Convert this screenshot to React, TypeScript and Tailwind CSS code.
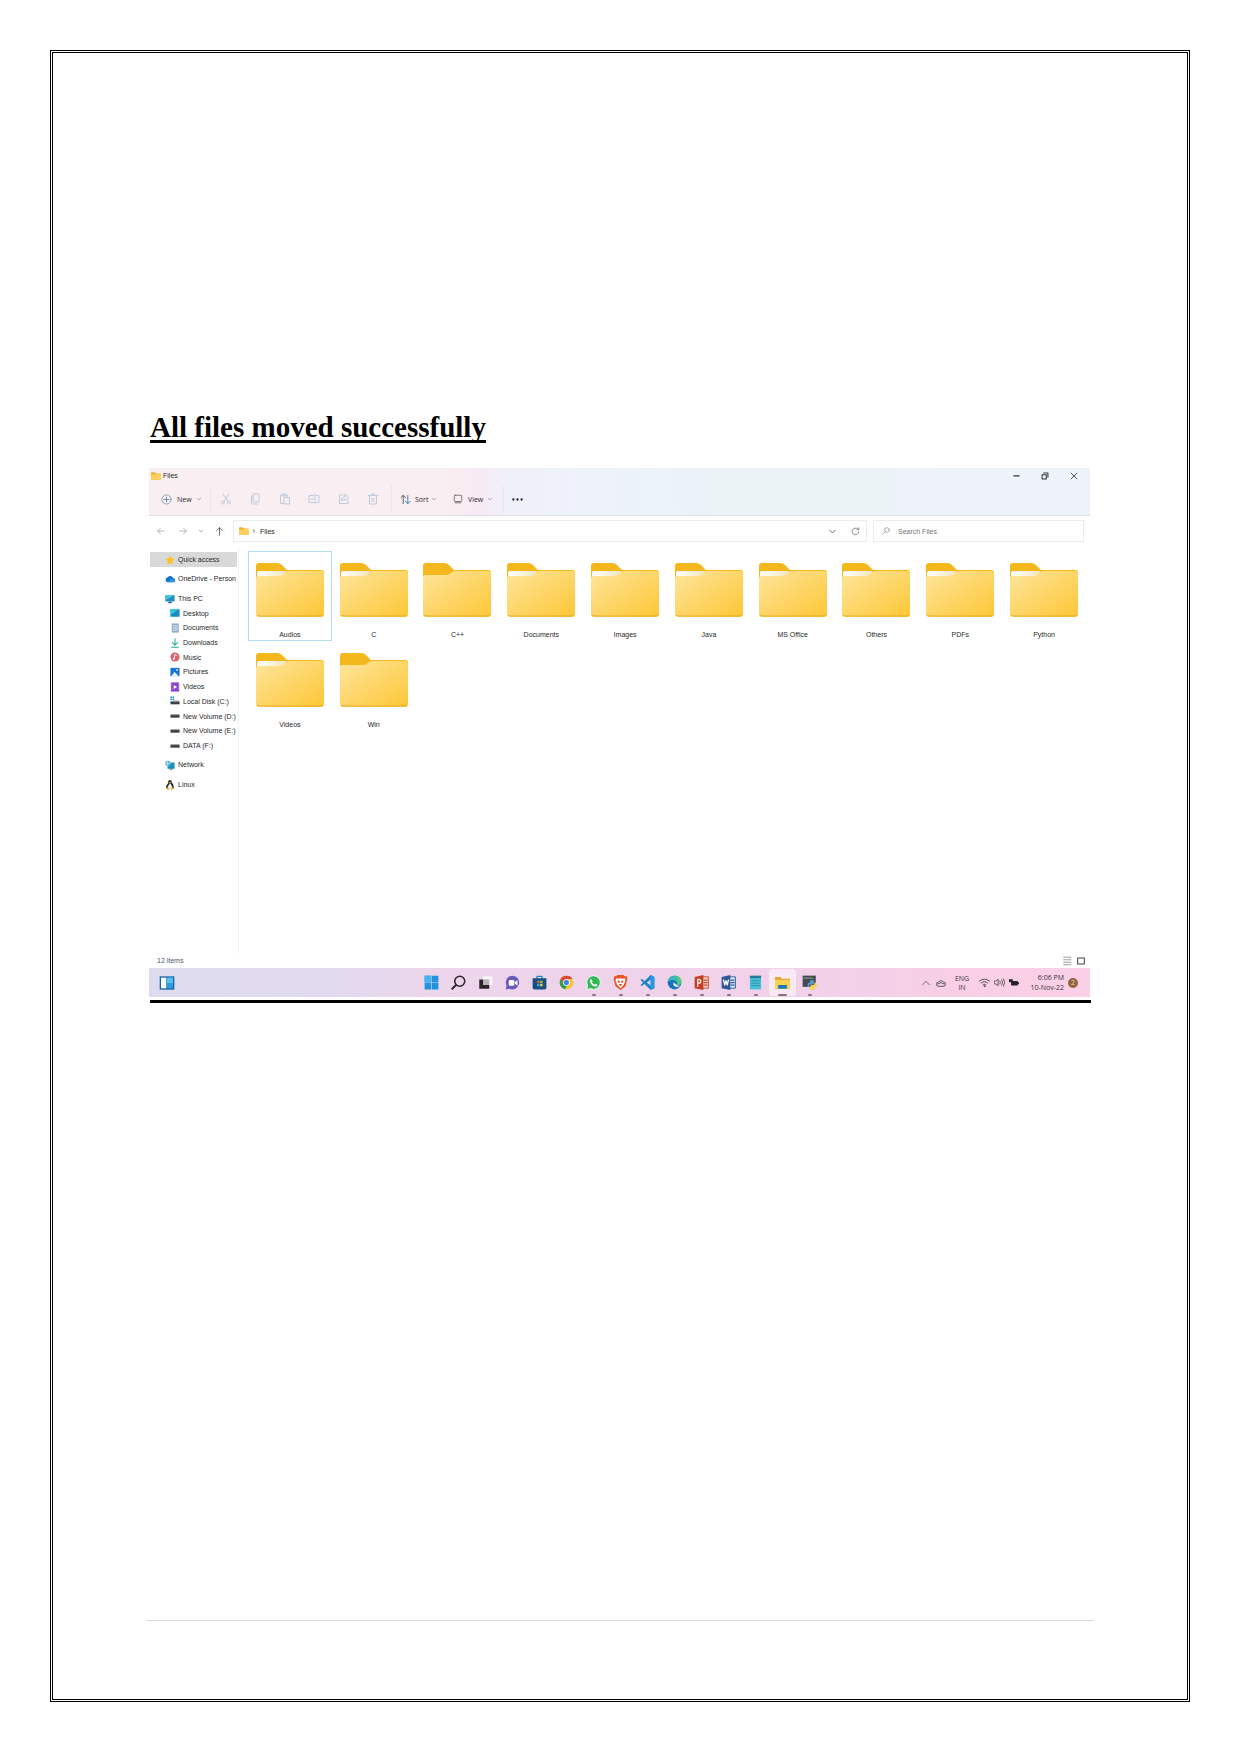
import React from "react";

type Kids = { children: React.ReactNode };

function Ico({ s = 12, children, stroke = "none" }: Kids & { s?: number; stroke?: string }) {
  return (
    <svg width={s} height={s} viewBox="0 0 24 24" fill="none" stroke={stroke} strokeWidth="2" strokeLinecap="round" strokeLinejoin="round" className="shrink-0" aria-hidden="true">
      {children}
    </svg>
  );
}

const MiniFolder = () => (
  <Ico s={10}>
    <path d="M0 5q0-2 2-2h7l3 3h10q2 0 2 2v11q0 2-2 2H2q-2 0-2-2z" fill="#efb52b" />
    <path d="M0 9h9l3-2h12v12q0 2-2 2H2q-2 0-2-2z" fill="#fbd05c" />
  </Ico>
);

const Caret = ({ s = 4 }: { s?: number }) => (
  <Ico s={s} stroke="#8a8a8a"><path d="M2 8l10 9 10-9" strokeWidth="4" /></Ico>
);

function BigFolder({ full }: { full: boolean }) {
  return (
    <svg viewBox="0 0 68 54" className="block h-[54px] w-[68px]" aria-hidden="true">
      <defs>
        <linearGradient id="folderFront" x1="0" y1="0" x2="1" y2="1">
          <stop offset="0" stopColor="#fee69c" />
          <stop offset="1" stopColor="#fdc636" />
        </linearGradient>
        <linearGradient id="folderPaper" x1="0" y1="0" x2="1" y2="0">
          <stop offset="0" stopColor="#ffffff" />
          <stop offset="1" stopColor="#f3e6bd" />
        </linearGradient>
      </defs>
      <path d="M0 3q0-3 3-3h18q3 0 5 2l5 5h34q3 0 3 3v20H0z" fill="#f5b81c" />
      {full ? (
        <path d="M0 14q0-2 2-2h21q3 0 5-2l1-1q2-1 4-1h32q3 0 3 3v40q0 3-3 3H3q-3 0-3-3z" fill="url(#folderFront)" />
      ) : (
        <>
          <path d="M1 10q0-2 2-2h27v6H1z" fill="url(#folderPaper)" />
          <path d="M0 15q0-2 2-2h21q3 0 5-2l2-2q1-1 4-1h31q3 0 3 3v40q0 3-3 3H3q-3 0-3-3z" fill="url(#folderFront)" />
        </>
      )}
      <path d="M1 52q1 1 3 1h60q2 0 3-1" stroke="#e9ad25" fill="none" />
    </svg>
  );
}

const Drive = () => (
  <Ico s={10}><path d="M1 9h22v7H1z" fill="#3c3f43" /><path d="M2 8h20v2H2z" fill="#8f9397" /></Ico>
);

const side: Record<string, React.ReactNode> = {
  star: <Ico s={10}><path d="M12 1l3.3 7.3 8 .8-6 5.4 1.8 8L12 18.300l-7.100 4.200 1.800-8-6-5.400 8-.8z" fill="#fcc419" /></Ico>,
  cloud: <Ico s={10}><path d="M6 20a6 6 0 01-.5-11.500A8 8 0 0120 10a5 5 0 01-1 10z" fill="#1473c8" /><path d="M6 20l12-9a5 5 0 011 9z" fill="#2a9be8" /></Ico>,
  pc: <Ico s={10}><path d="M1 3h22v15H1z" fill="#1e8fbd" /><path d="M1 3h22L1 15z" fill="#45c3df" /><path d="M9 18h6v2h2v2H7v-2h2z" fill="#2c6f92" /></Ico>,
  desktop: <Ico s={10}><path d="M1 3h22v18H1z" fill="#1590c0" /><path d="M1 3h20L1 17z" fill="#36c6e0" /></Ico>,
  doc: <Ico s={10}><path d="M4 1h17v22H4z" fill="#92acc6" /><path d="M7 7h11M7 12h11M7 17h11" stroke="#eef5fb" /></Ico>,
  down: <Ico s={10} stroke="#27ad91"><path d="M12 2v14M6 11l6 6 6-6M4 22h16" strokeWidth="2.500" /></Ico>,
  music: <Ico s={10}><circle cx="12" cy="12" r="11" fill="#dc6365" /><path d="M11 16V6l5 2" stroke="#fff" /><circle cx="9" cy="16" r="2.500" fill="#fff" /></Ico>,
  pic: <Ico s={10}><path d="M1 2h22v20H1z" fill="#1976d2" /><path d="M3 22l8-10 10 10z" fill="#e9f6ff" /><circle cx="17" cy="7" r="2" fill="#fff" /></Ico>,
  video: <Ico s={10}><path d="M2 1h20v22H2z" fill="#8646c8" /><path d="M9 7l8 5-8 5z" fill="#fff" /><path d="M4 4v17M20 4v17" stroke="#b98ae6" strokeDasharray="2 4" /></Ico>,
  disk: <Ico s={10}><path d="M1 1h4v4H1zM6 1h4v4H6zM1 6h4v4H1zM6 6h4v4H6z" fill="#2b93cf" /><path d="M1 13h22v7H1z" fill="#3c3f43" /><path d="M7 11h15v2H7z" fill="#8f9397" /></Ico>,
  drive: <Drive />,
  net: <Ico s={10}><path d="M6 6h17v15H6z" fill="#1d8fc0" /><circle cx="7" cy="8" r="6.500" fill="#4baecb" /><path d="M1 8h12M7 2q-4 6 0 12" stroke="#c5eaf3" /><path d="M10 21h9v2h-9z" fill="#2c6f92" /></Ico>,
  linux: <Ico s={10}><path d="M12 0q5 0 4.500 6 6 7 5 14H2.500Q2 13 7.500 7 7 0 12 0z" fill="#2a2826" /><path d="M12 8q5 5 4.500 12h-9Q7 13 12 8z" fill="#fff" /><path d="M1 20l5-3 4 5-2 2zM23 20l-5-3-4 5 2 2zM9 5h6l-3 4z" fill="#e9a62b" /></Ico>,
};

const pcItems: [string, string][] = [
  ["desktop", "Desktop"], ["doc", "Documents"], ["down", "Downloads"], ["music", "Music"], ["pic", "Pictures"],
  ["video", "Videos"], ["disk", "Local Disk (C:)"], ["drive", "New Volume (D:)"], ["drive", "New Volume (E:)"], ["drive", "DATA (F:)"],
];

function SideItem({ icon, label, sub, active }: { icon: string; label: string; sub?: boolean; active?: boolean }) {
  return (
    <a href="#" className={`flex items-center gap-[3px] whitespace-nowrap ${sub ? "pl-5" : "h-[15px] pl-[15px]"} ${active ? "bg-[#d9d9d9]" : ""}`}>
      {side[icon]}
      <span>{label}</span>
    </a>
  );
}

const tools: [string, React.ReactNode][] = [
  ["Cut", <><path d="M6 2l10 15M18 2L8 17" /><circle cx="6" cy="19" r="3" /><circle cx="18" cy="19" r="3" /></>],
  ["Copy", <><rect x="8" y="2" width="12" height="16" rx="2" /><path d="M8 5q-3 0-3 3v11q0 3 3 3h9" /></>],
  ["Paste", <><path d="M9 21H3V4h14v4M7 2h6v4H7zM11 9h10v13H11z" /></>],
  ["Rename", <><path d="M12 5H2v14h10M17 5h5v14h-5M14 2v20M6 12h6" /></>],
  ["Share", <><path d="M10 4H3v17h17v-6M14 3l8 6-8 6v-3q-5 0-7 4 0-9 7-9z" /></>],
  ["Delete", <><path d="M2 5h20M5 5v17h14V5M9 5V2h6v3M9 10l6 7M15 10l-6 7" /></>],
];

const Sep = () => <span className="h-[26px] w-px bg-[#e9e4ea]" />;

const folders: [string, boolean][] = [
  ["Audios", false], ["C", false], ["C++", true], ["Documents", false], ["Images", false], ["Java", false],
  ["MS Office", false], ["Others", false], ["PDFs", false], ["Python", false], ["Videos", false], ["Win", true],
];

const apps: [string, number, React.ReactNode][] = [
  ["Start", 0, <><path d="M1 1h10.500v10.500H1zM12.500 1H23v10.500H12.500zM1 12.500h10.500V23H1zM12.500 12.500H23V23H12.500z" fill="#2292df" /><path d="M1 1h10.500v10.500H1z" fill="#42b4ec" /></>],
  ["Search", 0, <><circle cx="14" cy="10" r="8" stroke="#2e2730" strokeWidth="2.500" /><path d="M8 16l-6 6" stroke="#2e2730" strokeWidth="3" /></>],
  ["Task view", 0, <><path d="M8 2h15v14H8z" fill="#f8f4f7" /><path d="M2 7h6v9h10v6H2z" fill="#2b2729" /><path d="M8 7h10v9H8z" fill="#b9b3b7" /></>],
  ["Chat", 0, <><path d="M12 1a11 11 0 11-5 21l-6 1 1.500-6A11 11 0 0112 1z" fill="#6759bd" /><rect x="6" y="8" width="9" height="9" rx="2" fill="#fff" /><path d="M16 11l4-3v9l-4-3z" fill="#fff" /></>],
  ["Store", 0, <><path d="M8 6V2h8v4" stroke="#2386bd" /><path d="M1 5h22v15q0 3-3 3H4q-3 0-3-3z" fill="#164f82" /><path d="M8 9h4v4H8z" fill="#f05a3c" /><path d="M13 9h4v4h-4z" fill="#86c440" /><path d="M8 14h4v4H8z" fill="#35a9e0" /><path d="M13 14h4v4h-4z" fill="#fcc736" /></>],
  ["Chrome", 0, <><circle cx="12" cy="12" r="11" fill="#fac62e" /><path d="M2.500 6.500A11 11 0 0121.500 6.500H12L7 14z" fill="#df4435" /><path d="M2.500 6.500L8 15l5 1-3 6.800A11 11 0 012.500 6.500z" fill="#2c9e50" /><circle cx="12" cy="12" r="5" fill="#3c7fe3" stroke="#fff" strokeWidth="1.500" /></>],
  ["WhatsApp", 1, <><path d="M12 1a11 11 0 11-5 20.800L1 23l1.500-6A11 11 0 0112 1z" fill="#32b855" stroke="#f4fbf5" strokeWidth="1.500" /><path d="M8 6l2.500 4-1 1.500q1.500 3 4 4l1.500-1.500 3.500 2q-1 3-4 2.500Q8 17 6.500 10 6 7 8 6z" fill="#fff" /></>],
  ["Brave", 1, <><path d="M7 0h10l2 2h3l1 5-3 11-8 6-8-6L1 7l1-5h3z" fill="#ec5327" /><path d="M5 5l4 1 3-1 3 1 4-1 1 4-3 7-5 5-5-5-3-7z" fill="#fff" /><path d="M7 8l4 2v2l-2 1zM17 8l-4 2v2l2 1zM9 15l3-1 3 1-3 3z" fill="#ec5327" /></>],
  ["Visual Studio Code", 1, <><path d="M17 0l6 3v18l-6 3L7 14l-4 4-2-2 4-4-4-4 2-2 4 4zM17 7l-6 5 6 5z" fill="#1b83c9" fillRule="evenodd" /><path d="M17 0l6 3v18l-6 3z" fill="#2b9ae6" /></>],
  ["Edge", 1, <><circle cx="12" cy="12" r="11" fill="#1773bd" /><path d="M1 11C2-2 22-2 23 10q0 7-8 6 3-2 1-5Q10 5 1 11z" fill="#3ab8b4" /><path d="M14 1q9 1 9 9 0 7-8 6 3-2 1-5 2-5-2-10z" fill="#55cc7d" /><path d="M11 11q-3 6 4 8 4 0 6-2-6 0-6-2-3-1-4-4z" fill="#e6f2f8" /></>],
  ["PowerPoint", 1, <><path d="M13 3h10v18H13z" fill="#f5d8cf" stroke="#c64225" strokeWidth="1.500" /><path d="M16 8h5M16 12h5M16 16h5" stroke="#c64225" /><path d="M1 3l14-3v24L1 21z" fill="#c23e20" /><path d="M6 18V7h3q4 3 0 6H6" stroke="#fff" /></>],
  ["Word", 1, <><path d="M13 3h10v18H13z" fill="#e3ebf6" stroke="#2b579a" strokeWidth="1.500" /><path d="M16 8h5M16 12h5M16 16h5" stroke="#2b579a" /><path d="M1 3l14-3v24L1 21z" fill="#2b579a" /><path d="M4 8l2 8 2-7 2 7 2-8" stroke="#fff" /></>],
  ["Notepad", 1, <><path d="M3 3h18v20H3z" fill="#48bfd8" /><path d="M3 1h18v4H3z" fill="#227e96" /><path d="M6 9h12M6 13h12M6 17h12" stroke="#2f93ae" strokeWidth="1.500" /></>],
  ["File Explorer", 2, <><path d="M0 3h9l2 3h13v16H0z" fill="#e7a92e" /><path d="M0 8h24v14H0z" fill="#fbd154" /><path d="M5 16h14v6H5z" fill="#1d78b8" /></>],
  ["Python IDLE", 1, <><path d="M1 1h21v18H1z" fill="#42494f" /><path d="M3 5h14" stroke="#8a9297" /><path d="M9 19v-4q0-3 3-3h1V9q0-1 3-1t3 1v4q0 2-3 2h-3q-2 0-2 4z" fill="#5b9bd0" /><path d="M20 12h1q3 0 3 4t-3 4h-4v1h3v2q0 1-3 1t-4-1v-4q0-3 3-3h2q2 0 2-4z" fill="#f7d34a" /></>],
];

export default function App() {
  return (
    <div className="min-h-[1752px] bg-white p-[50px] text-black">
      <main className="flex min-h-[1652px] flex-col border-[3px] border-double border-black pr-[96px] pl-[97px]">
        <h1 className="mt-[362px] w-fit border-b-[3px] border-black font-['Liberation_Serif',serif] text-[29px] leading-[25px] font-bold whitespace-nowrap">
          All files moved successfully
        </h1>

        <section className="mt-[25px] mr-px -ml-px font-['Liberation_Sans',sans-serif] text-[7px] leading-[9px] text-[#292929]">
          <header className="border-b border-[#dfe0e6] bg-[linear-gradient(90deg,#f9eef1_0%,#f9eef1_31%,#f8eaf4_35%,#f0f0fa_38%,#edf2fb_48%,#ebf3f7_60%,#ecf3f7_78%,#eef2fb_86%,#eef2fb_100%)]">
            <div className="flex h-[15px] items-center gap-[2px] pl-[2px]">
              <MiniFolder />
              <span>Files</span>
              <div className="ml-auto flex items-center gap-[19px] pr-[11px]">
                <button aria-label="Minimize"><Ico s={9} stroke="#333"><path d="M5 13h14" strokeWidth="3" /></Ico></button>
                <button aria-label="Restore"><Ico s={10} stroke="#333"><path d="M5 9h10v10H5zM9 5h10v10" strokeWidth="2.500" /></Ico></button>
                <button aria-label="Close"><Ico s={10} stroke="#333"><path d="M5 5l14 14M19 5L5 19" /></Ico></button>
              </div>
            </div>
            <div className="flex h-8 items-center pl-3 font-['Open_Sans',sans-serif] text-[7px]">
              <button className="flex w-[49px] items-center gap-[5px]">
                <Ico s={11} stroke="#5a8a9d"><circle cx="12" cy="12" r="10" strokeWidth="1.500" /><path d="M12 7v10M7 12h10" /></Ico>
                <span>New</span><Caret />
              </button>
              <Sep />
              <div className="ml-[9px] flex w-[171px] items-center justify-between pr-3">
                {tools.map(([name, art]) => (
                  <button key={name} aria-label={name}><Ico s={12} stroke="#bfcbdb">{art}</Ico></button>
                ))}
              </div>
              <Sep />
              <button className="ml-2 flex w-[53px] items-center gap-1">
                <Ico s={11} stroke="#377fbd"><path d="M7 21V3M2 8l5-5 5 5" stroke="#555" /><path d="M17 3v18M12 16l5 5 5-5" /></Ico>
                <span>Sort</span><Caret />
              </button>
              <button className="flex w-[50px] items-center gap-[5px]">
                <Ico s={10} stroke="#666"><rect x="3" y="3" width="18" height="15" rx="2" /><path d="M5 21h14" /></Ico>
                <span>View</span><Caret />
              </button>
              <Sep />
              <button aria-label="See more" className="ml-2"><Ico s={11}><circle cx="3" cy="12" r="2.500" fill="#222" /><circle cx="12" cy="12" r="2.500" fill="#222" /><circle cx="21" cy="12" r="2.500" fill="#222" /></Ico></button>
            </div>
          </header>

          <nav aria-label="Address" className="flex h-[31px] items-center pr-[6px] pb-px pl-2">
            <div className="flex w-[76px] items-center">
              <button aria-label="Back" className="w-[22px]"><Ico s={8} stroke="#999"><path d="M22 12H2M10 4l-8 8 8 8" /></Ico></button>
              <button aria-label="Forward" className="w-5"><Ico s={8} stroke="#999"><path d="M2 12h20M14 4l8 8-8 8" /></Ico></button>
              <button aria-label="Recent" className="w-4"><Caret /></button>
              <button aria-label="Up"><Ico s={9} stroke="#444"><path d="M12 22V2M4 10l8-8 8 8" /></Ico></button>
            </div>
            <div className="flex h-[22px] flex-1 items-center border border-[#ececec] pr-[6px] pl-[5px]">
              <MiniFolder />
              <span className="ml-[3px]"><Ico s={4} stroke="#333"><path d="M7 3l9 9-9 9" strokeWidth="4" /></Ico></span>
              <span className="ml-1">Files</span>
              <div className="ml-auto flex items-center gap-[15px]">
                <button aria-label="History"><Ico s={7} stroke="#555"><path d="M3 8l9 9 9-9" strokeWidth="3" /></Ico></button>
                <button aria-label="Refresh"><Ico s={9} stroke="#666"><path d="M21 12a9 9 0 11-3-7M21 2v5h-5" /></Ico></button>
              </div>
            </div>
            <label className="ml-[6px] flex h-[22px] w-[211px] items-center gap-2 border border-[#ececec] pl-2">
              <Ico s={8} stroke="#8a8a8a"><circle cx="15" cy="9" r="7" /><path d="M10 14l-8 8" /></Ico>
              <input aria-label="Search Files" placeholder="Search Files" className="min-w-0 flex-1 bg-transparent outline-none placeholder:text-[#757575]" />
            </label>
          </nav>

          <div className="flex h-[407px]">
            <aside className="flex w-[90px] shrink-0 flex-col border-r border-[#f4f4f4] pt-[5px] pr-px pl-px">
              <SideItem icon="star" label="Quick access" active />
              <div className="mt-1 mb-[5px]"><SideItem icon="cloud" label="OneDrive - Person" /></div>
              <div className="grid h-[162px] auto-rows-fr">
                <SideItem icon="pc" label="This PC" />
                {pcItems.map(([icon, label]) => <SideItem key={label} icon={icon} label={label} sub />)}
              </div>
              <div className="mt-1 mb-[5px]"><SideItem icon="net" label="Network" /></div>
              <SideItem icon="linux" label="Linux" />
            </aside>
            <div className="grid flex-1 auto-rows-[90px] grid-cols-10 content-start pt-1 pr-1 pl-[9px]">
              {folders.map(([name, full], i) => (
                <button key={name} className={`flex flex-col items-center border pt-[11px] ${i === 0 ? "border-[#b5dcee]" : "border-transparent"}`}>
                  <BigFolder full={full} />
                  <span className="mt-[13px]">{name}</span>
                </button>
              ))}
            </div>
          </div>

          <div className="flex h-[14px] items-center gap-1 pr-1 pb-px pl-2 text-[#4c5470]">
            <span className="mr-auto">12 items</span>
            <button aria-label="Details"><Ico s={10} stroke="#888"><path d="M4 3h17M4 9h17M4 15h17M4 21h17" /></Ico></button>
            <button aria-label="Large icons"><Ico s={10} stroke="#444"><path d="M4 5h16v14H4z" strokeWidth="2.500" /></Ico></button>
          </div>

          <footer className="flex h-[29px] items-center bg-[linear-gradient(90deg,#dedbef_0%,#e1daef_20%,#ecd6ec_29%,#efd3ea_50%,#f2d1e9_75%,#f8cfe5_85%,#f9d0e5_100%)] font-['Open_Sans',sans-serif] text-[#3c3440]">
            <button aria-label="Widgets" className="ml-[10px]">
              <Ico s={16}><path d="M1 2h22v20H1z" fill="#1765a8" /><path d="M3 4h8v16H3z" fill="#f4fbff" /><path d="M12 4h9v16h-9z" fill="#2f9bdd" /><path d="M12 4h9v8h-9z" fill="#54c1ee" /></Ico>
            </button>
            <div className="ml-[243px] flex h-full items-center">
              {apps.map(([name, state, art]) => (
                <button key={name} aria-label={name} className={`relative flex h-[27px] w-[27px] items-center justify-center rounded-sm ${state === 2 ? "bg-[#f8e9f4]" : ""}`}>
                  <Ico s={15}>{art}</Ico>
                  {state > 0 && <span className={`absolute bottom-0 h-[2px] rounded-full ${state === 2 ? "w-[9px] bg-[#8f7078]" : "w-1 bg-[#8b7388]"}`} />}
                </button>
              ))}
            </div>
            <div className="ml-auto flex items-center pr-3">
              <button aria-label="Hidden icons"><Ico s={8} stroke="#333"><path d="M2 17L12 7l10 10" /></Ico></button>
              <span className="ml-[6px]"><Ico s={10} stroke="#444"><path d="M6 20a5 5 0 010-10 7 7 0 0112 0 5 5 0 010 10z" /><path d="M4 14q8-6 16 0" /></Ico></span>
              <span className="ml-2 w-4 text-center leading-[9px]">ENG<br />IN</span>
              <span className="ml-[9px]"><Ico s={11} stroke="#444"><path d="M1 9q11-9 22 0M5 13q7-6 14 0M9 17q3-3 6 0" /><circle cx="12" cy="20" r="1" fill="#444" /></Ico></span>
              <span className="ml-1"><Ico s={11} stroke="#444"><path d="M1 9h3l5-4v14l-5-4H1zM13 9q2 3 0 6M17 6q4 6 0 12M21 4q5 8 0 16" strokeWidth="1.800" /></Ico></span>
              <span className="ml-1"><Ico s={10}><path d="M5 7h16v11H5zM21 10h3v5h-3z" fill="#252025" /><path d="M0 3h9v7H0z" fill="#252025" /></Ico></span>
              <span className="ml-[9px] w-9 text-right leading-[10px] whitespace-nowrap">6:06 PM<br />10-Nov-22</span>
              <span className="ml-1 flex h-[10px] w-[10px] items-center justify-center rounded-full bg-[#92653e] text-[#ecd6bd]">2</span>
            </div>
          </footer>
        </section>
        <div className="mt-[3px] h-[3px] bg-black" />
        <hr className="mt-[617px] -mr-[3px] -ml-[3px] border-[#d9d9d9]" />
      </main>
    </div>
  );
}
